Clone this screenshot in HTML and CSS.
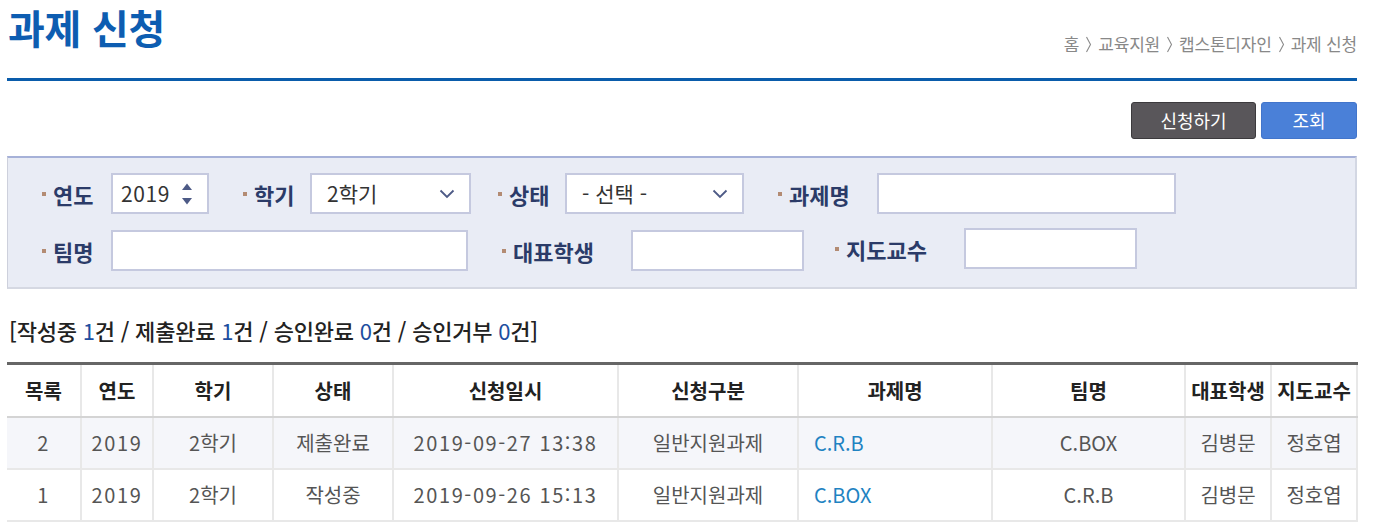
FILE: index.html
```html
<!DOCTYPE html>
<html lang="ko">
<head>
<meta charset="utf-8">
<title>과제 신청</title>
<link rel="stylesheet" href="styles.css">
</head>
<body>
<div class="page">
  <header class="page-head">
    <h1 class="page-title">과제 신청</h1>
    <nav class="crumbs">
      <span>홈</span>
      <svg class="sep" width="7" height="17" viewBox="0 0 7 17"><path d="M1.5 1 L5.5 8.5 L1.5 16" fill="none" stroke="#8a8a8a" stroke-width="1.1"/></svg>
      <span>교육지원</span>
      <svg class="sep" width="7" height="17" viewBox="0 0 7 17"><path d="M1.5 1 L5.5 8.5 L1.5 16" fill="none" stroke="#8a8a8a" stroke-width="1.1"/></svg>
      <span>캡스톤디자인</span>
      <svg class="sep" width="7" height="17" viewBox="0 0 7 17"><path d="M1.5 1 L5.5 8.5 L1.5 16" fill="none" stroke="#8a8a8a" stroke-width="1.1"/></svg>
      <span>과제 신청</span>
    </nav>
  </header>

  <div class="actions">
    <button class="btn btn-dark">신청하기</button>
    <button class="btn btn-blue">조회</button>
  </div>

  <section class="search">
    <div class="search-row">
      <div class="field">
        <span class="lbl w69"><i class="dot"></i>연도</span>
        <div class="box w98 spin-box"><span class="val num">2019</span>
          <svg class="spin" width="12" height="24" viewBox="0 0 12 24"><path d="M1 8 L6 1.5 L11 8 Z" fill="#4d5a86"/><path d="M1 16 L6 22.5 L11 16 Z" fill="#4d5a86"/></svg>
        </div>
      </div>
      <div class="field m34">
        <span class="lbl w67"><i class="dot"></i>학기</span>
        <div class="box w161 sel"><span class="val">2학기</span>
          <svg class="chev" width="16" height="10" viewBox="0 0 16 10"><path d="M1.5 1.5 L8 8 L14.5 1.5" fill="none" stroke="#4d5a86" stroke-width="1.8"/></svg>
        </div>
      </div>
      <div class="field m27">
        <span class="lbl w67"><i class="dot"></i>상태</span>
        <div class="box w179 sel"><span class="val">- 선택 -</span>
          <svg class="chev" width="16" height="10" viewBox="0 0 16 10"><path d="M1.5 1.5 L8 8 L14.5 1.5" fill="none" stroke="#4d5a86" stroke-width="1.8"/></svg>
        </div>
      </div>
      <div class="field m34">
        <span class="lbl w99"><i class="dot"></i>과제명</span>
        <div class="box w299"></div>
      </div>
    </div>
    <div class="search-row">
      <div class="field">
        <span class="lbl w69"><i class="dot"></i>팀명</span>
        <div class="box w357"></div>
      </div>
      <div class="field m34">
        <span class="lbl w129"><i class="dot"></i>대표학생</span>
        <div class="box w173"></div>
      </div>
      <div class="field m31 up2">
        <span class="lbl w129"><i class="dot"></i>지도교수</span>
        <div class="box w173"></div>
      </div>
    </div>
  </section>

  <p class="summary">[작성중 <b>1</b>건 / 제출완료 <b>1</b>건 / 승인완료 <b>0</b>건 / 승인거부 <b>0</b>건]</p>

  <table class="list">
    <colgroup>
      <col style="width:74px"><col style="width:72px"><col style="width:120px"><col style="width:120px"><col style="width:225px">
      <col style="width:180px"><col style="width:194px"><col style="width:193px"><col style="width:86px"><col style="width:86px">
    </colgroup>
    <thead>
      <tr><th>목록</th><th>연도</th><th>학기</th><th>상태</th><th>신청일시</th><th>신청구분</th><th>과제명</th><th>팀명</th><th>대표학생</th><th>지도교수</th></tr>
    </thead>
    <tbody>
      <tr class="alt"><td class="num">2</td><td class="num">2019</td><td>2학기</td><td>제출완료</td><td class="num">2019-09-27 13:38</td><td>일반지원과제</td><td class="left"><a href="#">C.R.B</a></td><td>C.BOX</td><td>김병문</td><td>정호엽</td></tr>
      <tr><td class="num">1</td><td class="num">2019</td><td>2학기</td><td>작성중</td><td class="num">2019-09-26 15:13</td><td>일반지원과제</td><td class="left"><a href="#">C.BOX</a></td><td>C.R.B</td><td>김병문</td><td>정호엽</td></tr>
    </tbody>
  </table>
</div>
</body>
</html>
```

FILE: styles.css
```css
* { box-sizing: border-box; }
body {
  margin: 0;
  background: #fff;
  font-family: "Noto Sans CJK KR", "Noto Sans", sans-serif;
  color: #333;
}
.page {
  width: 1350px;
  margin-left: 7px;
}
.page-head {
  height: 81px;
  display: flex;
  justify-content: space-between;
  align-items: flex-start;
  border-bottom: 3px solid #0a5cab;
}
.page-title {
  margin: 0;
  padding: 0 0 0 1px;
  font-size: 40px;
  line-height: 54px;
  font-weight: 700;
  color: #0d5db1;
  letter-spacing: -0.3px;
  white-space: nowrap;
}
.crumbs {
  margin-top: 33px;
  display: flex;
  align-items: center;
  gap: 6px;
  font-size: 17px;
  line-height: 22px;
  color: #888;
  white-space: nowrap;
  letter-spacing: -0.2px;
}
.sep { display: block; margin-top: 1px; }
.actions {
  display: flex;
  justify-content: flex-end;
  gap: 5px;
  margin-top: 21px;
}
.btn {
  height: 37px;
  border-radius: 3px;
  font-family: inherit;
  font-size: 18px;
  color: #fff;
  padding: 0;
  line-height: 33px;
}
.btn-dark { width: 125px; background: #59565a; border: 1px solid #3c3a3d; }
.btn-blue { width: 96px; background: #4a80d8; border: 1px solid #4275cb; }

.search {
  margin-top: 17px;
  background: #e9ecf5;
  border-top: 2px solid #a6b1d8;
  border-left: 1px solid #cdd0dc;
  border-right: 2px solid #d3d7e3;
  border-bottom: 2px solid #d5d8e2;
  padding: 15px 0 16px 34px;
  display: flex;
  flex-direction: column;
  gap: 16px;
}
.search-row { display: flex; align-items: center; }
.field { display: flex; align-items: center; }
.field.up2 { margin-top: -4px; }
.m34 { margin-left: 34px; }
.m27 { margin-left: 27px; }
.m31 { margin-left: 31px; }
.lbl {
  display: flex;
  align-items: center;
  font-size: 22px;
  font-weight: 700;
  color: #2b3b68;
  white-space: nowrap;
}
.dot {
  display: inline-block;
  width: 4px;
  height: 4px;
  background: #b38b73;
  margin-right: 7px;
}
.w67 { width: 67px; }
.w69 { width: 69px; }
.w99 { width: 99px; }
.w129 { width: 129px; }
.box {
  height: 41px;
  background: #fff;
  border: 2px solid #c5c9df;
  display: flex;
  align-items: center;
  padding: 0 14px 0 8px;
  font-size: 21px;
  color: #333;
}
.w98 { width: 98px; }
.w161 { width: 161px; }
.w179 { width: 179px; }
.w299 { width: 299px; }
.w357 { width: 357px; }
.w173 { width: 173px; }
.sel { padding-left: 15px; }
.spin-box { justify-content: space-between; padding-right: 14px; }
.spin-box .num { letter-spacing: 0.6px; }
.sel { justify-content: space-between; }
.val { line-height: 1; white-space: nowrap; }

.summary {
  margin: 26px 0 0 2px;
  font-size: 22px;
  line-height: 30px;
  font-weight: 500;
  color: #222;
  white-space: nowrap;
  letter-spacing: -0.2px;
}
.summary b { font-weight: 400; color: #1d4ea0; }

.list {
  margin-top: 17px;
  width: 1350px;
  border-collapse: collapse;
  table-layout: fixed;
  border-top: 3px solid #666;
}
.list th, .list td {
  border-left: 2px solid #e8e8e8;
  text-align: center;
  padding: 0;
  font-size: 20px;
  white-space: nowrap;
}
.list th:first-child, .list td:first-child { border-left: none; }
.list th:last-child, .list td:last-child { border-right: 2px solid #e8e8e8; }
.list th {
  height: 53px;
  font-weight: 700;
  color: #222;
  border-bottom: 2px solid #d4d4d4;
}
.list td {
  height: 52px;
  color: #555;
  border-bottom: 2px solid #e8e8e8;
}
.list td.num { letter-spacing: 1.6px; }
.list tr.alt td { background: #f5f6fa; }
.list td.left { text-align: left; padding-left: 15px; }
.list a { color: #1f83c2; text-decoration: none; }
```
